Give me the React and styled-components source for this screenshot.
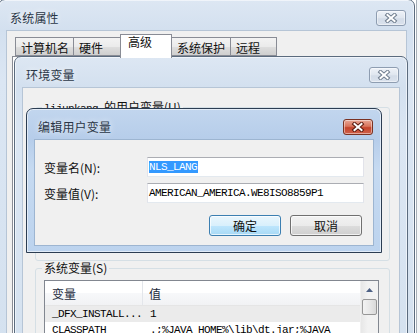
import React from 'react';
import styled, { createGlobalStyle } from 'styled-components';

const GlobalStyle = createGlobalStyle`
  html, body {
    margin: 0;
    padding: 0;
  }
  body {
    background: #fff;
    font-family: "Noto Sans CJK SC", "Liberation Sans", sans-serif;
    font-size: 12px;
    color: #000;
  }
`;

const Desktop = styled.div`
  position: relative;
  width: 420px;
  height: 333px;
  overflow: hidden;
  background: #fff;
`;

const BackEdge = styled.div`
  position: absolute;
  left: 416px;
  top: 0;
  width: 4px;
  height: 333px;
  border-left: 1px solid #a8b0b8;
  background: #f4f6f8;
`;

const Window = styled.div`
  position: absolute;
  left: ${(p) => p.$x}px;
  top: ${(p) => p.$y}px;
  width: ${(p) => p.$w}px;
  height: ${(p) => p.$h}px;
  box-sizing: border-box;
  display: flex;
  flex-direction: column;
  padding: 0 8px 7px;
  border: 1px solid ${(p) => (p.$active ? '#2c3d52' : '#5b6b7e')};
  border-radius: 7px 7px 0 0;
  background: ${(p) =>
    p.$active
      ? 'linear-gradient(180deg, #c2d6ee 0px, #b6cdea 30px, #c6daf1 60px, #bcd3ee 100%)'
      : 'linear-gradient(180deg, #dde7f3 0px, #d3e0ef 30px, #dbe6f3 80px, #d4e1ef 100%)'};
  box-shadow: inset 0 0 0 1px rgba(255, 255, 255, 0.55);
`;

const TitleBar = styled.div`
  height: 31px;
  flex: none;
  display: flex;
  align-items: flex-start;
  justify-content: space-between;
  padding: 10px 0 0 3px;
  box-sizing: border-box;
`;

const Title = styled.span`
  line-height: 16px;
  font-size: 12px;
  color: #2a3646;
  text-shadow: 0 0 6px rgba(255, 255, 255, 0.9);
  letter-spacing: 0.2px;
`;

const CloseButton = styled.div`
  width: 30px;
  height: 16px;
  box-sizing: border-box;
  display: flex;
  align-items: center;
  justify-content: center;
  border-radius: 3px;
  border: 1px solid ${(p) => (p.$active ? '#7a3222' : '#8e9db1')};
  background: ${(p) =>
    p.$active
      ? 'linear-gradient(180deg, #e9a796 0%, #d9745c 45%, #c4432b 55%, #d0614a 100%)'
      : 'linear-gradient(180deg, #eef2f8 0%, #dfe6ef 50%, #d3dce8 55%, #dae2ed 100%)'};
  box-shadow: inset 0 0 0 1px rgba(255, 255, 255, 0.45);
`;

const CloseGlyph = ({ active }) => (
  <svg width="14" height="10" viewBox="0 0 14 10">
    <path d="M3.5 2 L10.5 8 M10.5 2 L3.5 8" stroke={active ? '#5a1a10' : '#6f7d8e'} strokeWidth="4" strokeLinecap="square" />
    <path d="M3.5 2 L10.5 8 M10.5 2 L3.5 8" stroke="#fff" strokeWidth="2" strokeLinecap="square" />
  </svg>
);

const Client = styled.div`
  flex: 1;
  min-height: 0;
  display: flex;
  flex-direction: column;
  background: #f0f0f0;
  box-shadow: 0 0 0 1px ${(p) => (p.$active ? '#9db5d1' : '#b6c5d6')};
`;

/* 系统属性 tabs */
const SheetClient = styled(Client)`
  padding: 3px 4px 0 5px;
`;

const TabStrip = styled.div`
  display: flex;
  align-items: flex-end;
  height: 22px;
  padding-left: 3px;
  position: relative;
  z-index: 1;
`;

const Tab = styled.div`
  width: ${(p) => p.$w}px;
  height: ${(p) => (p.$selected ? 24 : 19)}px;
  box-sizing: border-box;
  margin-right: -1px;
  margin-bottom: ${(p) => (p.$selected ? -2 : 0)}px;
  padding: ${(p) => (p.$selected ? '0 0 0 7px' : '3px 0 0 5px')};
  border: 1px solid #898c95;
  border-bottom: ${(p) => (p.$selected ? 'none' : '1px solid #898c95')};
  background: ${(p) => (p.$selected ? '#fff' : 'linear-gradient(180deg, #f3f3f3 0%, #ebebeb 50%, #dddddd 55%, #cfcfcf 100%)')};
  font-size: 12px;
  line-height: 14px;
  color: #111;
  white-space: nowrap;
`;

const TabPage = styled.div`
  flex: 1;
  border: 1px solid #898c95;
  background: #fff;
`;

/* 环境变量 */
const EnvClient = styled(Client)`
  padding: 19px 9px 0 12px;
  gap: 7px;
`;

const Group = styled.div`
  box-sizing: border-box;
  height: ${(p) => (p.$h ? `${p.$h}px` : 'auto')};
  flex: ${(p) => (p.$h ? 'none' : '1')};
  border: 1px solid #d5dfe5;
  border-radius: 3px;
  padding: 0 10px 0 8px;
  display: flex;
  flex-direction: column;
`;

const Legend = styled.div`
  margin: -8px 0 5px -2px;
  padding: 0 2px;
  width: fit-content;
  line-height: 14px;
  height: 14px;
  background: #f0f0f0;
  color: #111;
  white-space: nowrap;
`;

const Mono = styled.span`
  font-family: "Liberation Mono", "DejaVu Sans Mono", monospace;
  font-size: 11px;
  letter-spacing: -0.6px;
`;

const ListView = styled.div`
  flex: 1;
  display: flex;
  border: 1px solid #828790;
  background: #fff;
  min-height: 60px;
`;

const ListBody = styled.div`
  flex: 1;
  display: flex;
  flex-direction: column;
`;

const HeaderRow = styled.div`
  display: flex;
  height: 24px;
  flex: none;
  background: linear-gradient(180deg, #fff 0%, #fff 50%, #f7f8fa 51%, #f1f2f4 100%);
  border-bottom: 1px solid #e5e5e5;
`;

const HeaderCell = styled.div`
  width: ${(p) => (p.$w ? `${p.$w}px` : 'auto')};
  flex: ${(p) => (p.$w ? 'none' : '1')};
  box-sizing: border-box;
  padding-left: ${(p) => p.$pad}px;
  display: flex;
  align-items: center;
  border-right: ${(p) => (p.$w ? '1px solid #e3e6eb' : 'none')};
  font-size: 12px;
  color: #1b2a3c;
`;

const Row = styled.div`
  display: flex;
  height: 16px;
  flex: none;
  align-items: center;
  background: ${(p) => (p.$selected ? '#ebebeb' : 'transparent')};
`;

const Cell = styled.div`
  width: ${(p) => (p.$w ? `${p.$w}px` : 'auto')};
  flex: ${(p) => (p.$w ? 'none' : '1')};
  box-sizing: border-box;
  padding-left: ${(p) => p.$pad}px;
  white-space: nowrap;
  overflow: hidden;
  font-family: "Liberation Mono", "DejaVu Sans Mono", monospace;
  font-size: 11px;
  letter-spacing: -0.6px;
`;

const ScrollBar = styled.div`
  width: 17px;
  flex: none;
  display: flex;
  flex-direction: column;
  align-items: center;
  background: linear-gradient(90deg, #e7e7e7 0%, #f2f2f2 40%, #f2f2f2 100%);
  border-left: 1px solid #f0f0f0;
`;

const ArrowButton = styled.div`
  height: 17px;
  width: 17px;
  display: flex;
  align-items: center;
  justify-content: center;
`;

const Thumb = styled.div`
  width: 15px;
  height: 16px;
  box-sizing: border-box;
  margin-top: 1px;
  border: 1px solid #979797;
  border-radius: 2px;
  background: linear-gradient(90deg, #f3f3f3 0%, #e8e8e8 50%, #d9d9d9 100%);
`;

/* 编辑用户变量 */
const EditClient = styled(Client)`
  padding: 17px 9px 8px 9px;
`;

const FieldRow = styled.div`
  display: flex;
  align-items: center;
  height: 20px;
  margin-bottom: 6px;
`;

const Label = styled.div`
  width: 103px;
  flex: none;
  color: #111;
  font-size: 12px;
`;

const TextBox = styled.div`
  flex: 1;
  height: 20px;
  box-sizing: border-box;
  display: flex;
  align-items: center;
  padding-left: 1px;
  background: #fff;
  border: 1px solid #e2e3ea;
  border-top-color: #abadb3;
  border-bottom-color: #e3e9ef;
`;

const Selected = styled.span`
  background: #3399ff;
  color: #fff;
  line-height: 14px;
  padding-right: 1px;
`;

const ButtonRow = styled.div`
  display: flex;
  justify-content: flex-end;
  gap: 9px;
  margin-top: 6px;
  padding-right: 2px;
`;

const Button = styled.div`
  width: 72px;
  height: 21px;
  box-sizing: border-box;
  display: flex;
  align-items: center;
  justify-content: center;
  border-radius: 3px;
  border: 1px solid ${(p) => (p.$default ? '#3c7fb1' : '#707070')};
  background: ${(p) =>
    p.$default
      ? 'linear-gradient(180deg, #eaf6fd 0%, #d9f0fc 50%, #bee6fd 51%, #a7d9f5 100%)'
      : 'linear-gradient(180deg, #f2f2f2 0%, #ebebeb 50%, #dddddd 51%, #cfcfcf 100%)'};
  box-shadow: inset 0 0 0 1px rgba(255, 255, 255, 0.7);
  font-size: 12px;
  color: #111;
`;

const tabs = [
  { label: '计算机名', w: 59 },
  { label: '硬件', w: 48 },
  { label: '高级', w: 52, selected: true },
  { label: '系统保护', w: 60 },
  { label: '远程', w: 47 },
];

const sysVars = [
  { name: '_DFX_INSTALL...', value: '1', selected: true },
  { name: 'CLASSPATH', value: '.;%JAVA_HOME%\\lib\\dt.jar;%JAVA' },
];

export default function App() {
  return (
    <Desktop>
      <GlobalStyle />
      <BackEdge />

      <Window $x={-2} $y={-1} $w={417} $h={360}>
        <TitleBar>
          <Title>系统属性</Title>
          <CloseButton>
            <CloseGlyph />
          </CloseButton>
        </TitleBar>
        <SheetClient>
          <TabStrip>
            {tabs.map((t) => (
              <Tab key={t.label} $w={t.w} $selected={t.selected}>
                {t.label}
              </Tab>
            ))}
          </TabStrip>
          <TabPage />
        </SheetClient>
      </Window>

      <Window $x={14} $y={56} $w={394} $h={320}>
        <TitleBar>
          <Title>环境变量</Title>
          <CloseButton>
            <CloseGlyph />
          </CloseButton>
        </TitleBar>
        <EnvClient>
          <Group $h={154}>
            <Legend>
              <Mono>lijunkang </Mono>的用户变量(U)
            </Legend>
          </Group>
          <Group>
            <Legend>系统变量(S)</Legend>
            <ListView>
              <ListBody>
                <HeaderRow>
                  <HeaderCell $w={98} $pad={7}>变量</HeaderCell>
                  <HeaderCell $pad={6}>值</HeaderCell>
                </HeaderRow>
                {sysVars.map((v) => (
                  <Row key={v.name} $selected={v.selected}>
                    <Cell $w={98} $pad={7}>{v.name}</Cell>
                    <Cell $pad={7}>{v.value}</Cell>
                  </Row>
                ))}
              </ListBody>
              <ScrollBar>
                <ArrowButton>
                  <svg width="7" height="4" viewBox="0 0 7 4">
                    <path d="M0 4 L3.5 0 L7 4 Z" fill="#4d6185" />
                  </svg>
                </ArrowButton>
                <Thumb />
              </ScrollBar>
            </ListView>
          </Group>
        </EnvClient>
      </Window>

      <Window $x={26} $y={108} $w={356} $h={145} $active>
        <TitleBar>
          <Title>编辑用户变量</Title>
          <CloseButton $active>
            <CloseGlyph active />
          </CloseButton>
        </TitleBar>
        <EditClient $active>
          <FieldRow>
            <Label>变量名(N):</Label>
            <TextBox>
              <Mono>
                <Selected>NLS_LANG</Selected>
              </Mono>
            </TextBox>
          </FieldRow>
          <FieldRow>
            <Label>变量值(V):</Label>
            <TextBox>
              <Mono>AMERICAN_AMERICA.WE8ISO8859P1</Mono>
            </TextBox>
          </FieldRow>
          <ButtonRow>
            <Button $default>确定</Button>
            <Button>取消</Button>
          </ButtonRow>
        </EditClient>
      </Window>
    </Desktop>
  );
}
